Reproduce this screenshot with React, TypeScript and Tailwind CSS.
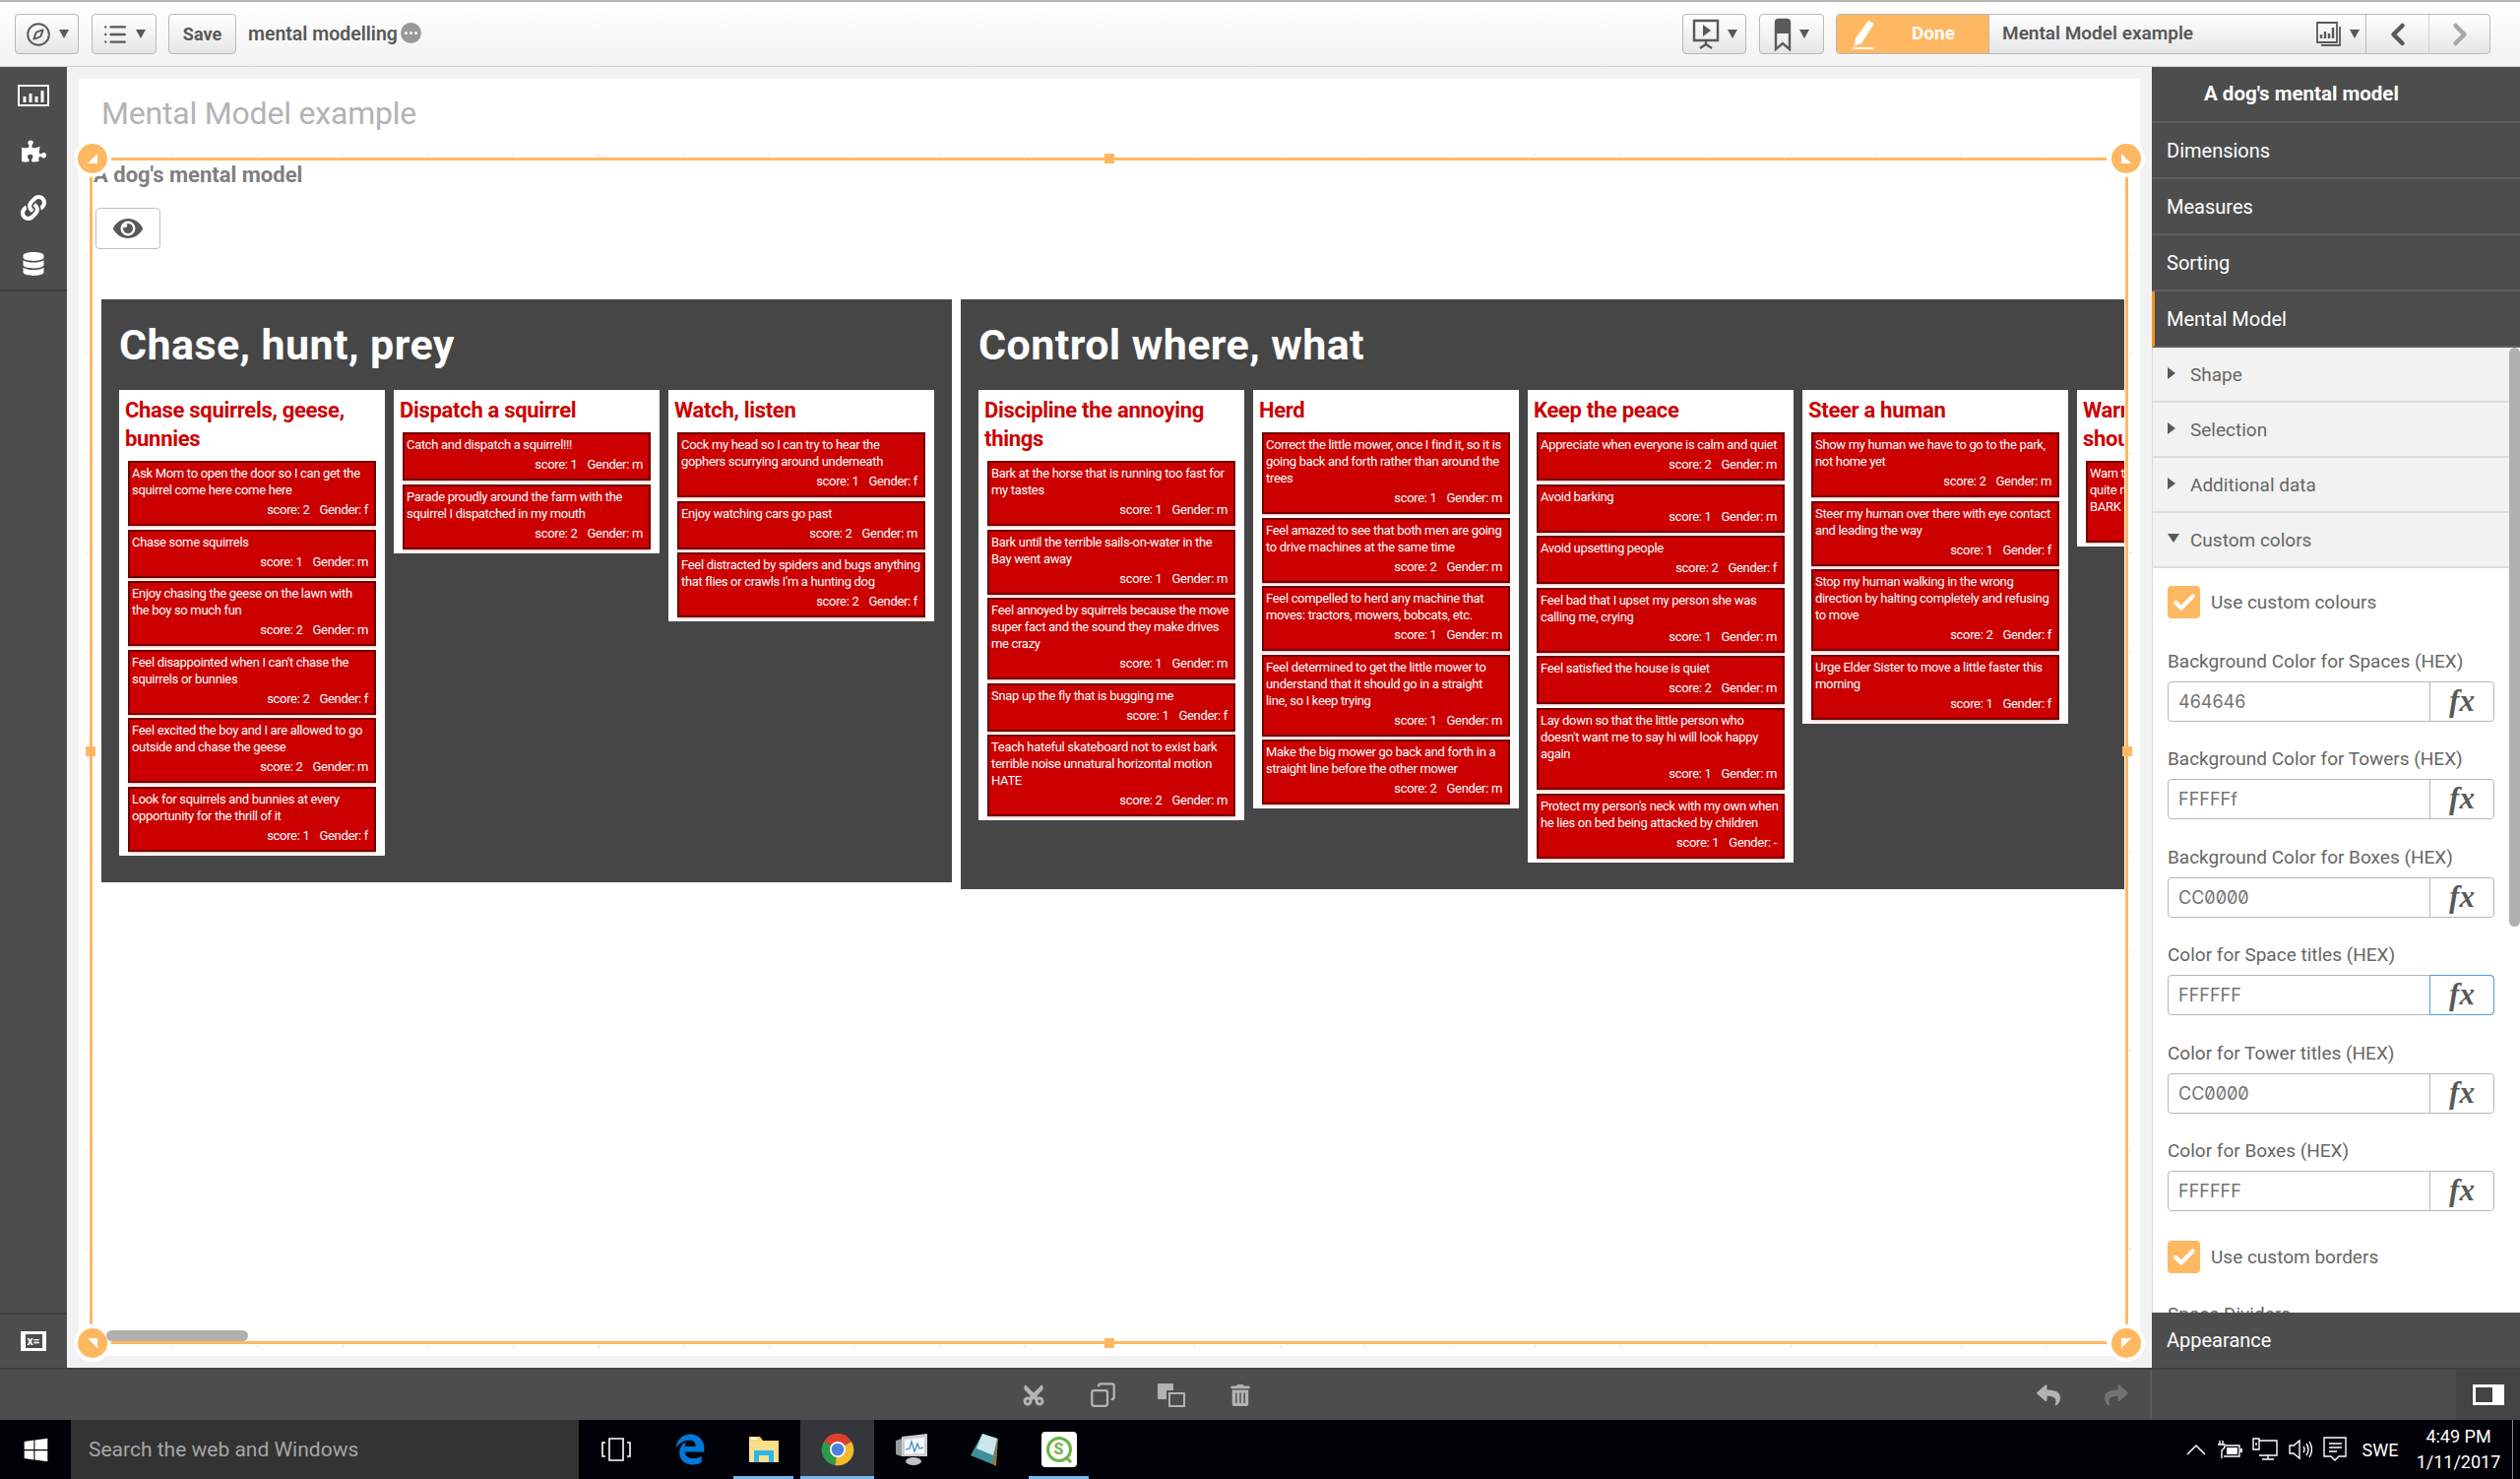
import { Compass, List, ChevronLeft, ChevronRight, Check, Copy } from 'lucide-react'
import { FaPuzzlePiece, FaLink, FaDatabase, FaEye, FaTrashAlt, FaCut, FaReply, FaShare, FaWindows, FaEdgeLegacy } from 'react-icons/fa'

type Item = { t: string; s: number; g: string }
type TowerData = { title: string; items: Item[] }

const chase: TowerData[] = [
  {
    title: 'Chase squirrels, geese,\nbunnies',
    items: [
      { t: 'Ask Mom to open the door so I can get the\nsquirrel come here come here', s: 2, g: 'f' },
      { t: 'Chase some squirrels', s: 1, g: 'm' },
      { t: 'Enjoy chasing the geese on the lawn with\nthe boy so much fun', s: 2, g: 'm' },
      { t: "Feel disappointed when I can't chase the\nsquirrels or bunnies", s: 2, g: 'f' },
      { t: 'Feel excited the boy and I are allowed to go\noutside and chase the geese', s: 2, g: 'm' },
      { t: 'Look for squirrels and bunnies at every\nopportunity for the thrill of it', s: 1, g: 'f' },
    ],
  },
  {
    title: 'Dispatch a squirrel',
    items: [
      { t: 'Catch and dispatch a squirrel!!!', s: 1, g: 'm' },
      { t: 'Parade proudly around the farm with the\nsquirrel I dispatched in my mouth', s: 2, g: 'm' },
    ],
  },
  {
    title: 'Watch, listen',
    items: [
      { t: 'Cock my head so I can try to hear the\ngophers scurrying around underneath', s: 1, g: 'f' },
      { t: 'Enjoy watching cars go past', s: 2, g: 'm' },
      { t: "Feel distracted by spiders and bugs anything\nthat flies or crawls I'm a hunting dog", s: 2, g: 'f' },
    ],
  },
]

const control: TowerData[] = [
  {
    title: 'Discipline the annoying\nthings',
    items: [
      { t: 'Bark at the horse that is running too fast for\nmy tastes', s: 1, g: 'm' },
      { t: 'Bark until the terrible sails-on-water in the\nBay went away', s: 1, g: 'm' },
      { t: 'Feel annoyed by squirrels because the move\nsuper fact and the sound they make drives\nme crazy', s: 1, g: 'm' },
      { t: 'Snap up the fly that is bugging me', s: 1, g: 'f' },
      { t: 'Teach hateful skateboard not to exist bark\nterrible noise unnatural horizontal motion\nHATE', s: 2, g: 'm' },
    ],
  },
  {
    title: 'Herd',
    items: [
      { t: 'Correct the little mower, once I find it, so it is\ngoing back and forth rather than around the\ntrees', s: 1, g: 'm' },
      { t: 'Feel amazed to see that both men are going\nto drive machines at the same time', s: 2, g: 'm' },
      { t: 'Feel compelled to herd any machine that\nmoves: tractors, mowers, bobcats, etc.', s: 1, g: 'm' },
      { t: 'Feel determined to get the little mower to\nunderstand that it should go in a straight\nline, so I keep trying', s: 1, g: 'm' },
      { t: 'Make the big mower go back and forth in a\nstraight line before the other mower', s: 2, g: 'm' },
    ],
  },
  {
    title: 'Keep the peace',
    items: [
      { t: 'Appreciate when everyone is calm and quiet', s: 2, g: 'm' },
      { t: 'Avoid barking', s: 1, g: 'm' },
      { t: 'Avoid upsetting people', s: 2, g: 'f' },
      { t: 'Feel bad that I upset my person she was\ncalling me, crying', s: 1, g: 'm' },
      { t: 'Feel satisfied the house is quiet', s: 2, g: 'm' },
      { t: "Lay down so that the little person who\ndoesn't want me to say hi will look happy\nagain", s: 1, g: 'm' },
      { t: "Protect my person's neck with my own when\nhe lies on bed being attacked by children", s: 1, g: '-' },
    ],
  },
  {
    title: 'Steer a human',
    items: [
      { t: 'Show my human we have to go to the park,\nnot home yet', s: 2, g: 'm' },
      { t: 'Steer my human over there with eye contact\nand leading the way', s: 1, g: 'f' },
      { t: 'Stop my human walking in the wrong\ndirection by halting completely and refusing\nto move', s: 2, g: 'f' },
      { t: 'Urge Elder Sister to move a little faster this\nmorning', s: 1, g: 'f' },
    ],
  },
  {
    title: 'Warn the humans\nshould they',
    items: [{ t: 'Warn the humans\nquite near\nBARK', s: 1, g: 'm' }],
  },
]

const fields = [
  { label: 'Background Color for Spaces (HEX)', value: '464646' },
  { label: 'Background Color for Towers (HEX)', value: 'FFFFFf' },
  { label: 'Background Color for Boxes (HEX)', value: 'CC0000' },
  { label: 'Color for Space titles (HEX)', value: 'FFFFFF', focus: true },
  { label: 'Color for Tower titles (HEX)', value: 'CC0000' },
  { label: 'Color for Boxes (HEX)', value: 'FFFFFF' },
]

function Caret({ className = 'text-[#595959]' }: { className?: string }) {
  return (
    <svg width="10" height="9" viewBox="0 0 10 9" className={className}>
      <path d="M0 0h10L5 9z" fill="currentColor" />
    </svg>
  )
}

function ToolButton({ children, width }: { children: React.ReactNode; width: string }) {
  return (
    <div className={`${width} h-[41px] flex items-center justify-center gap-2 rounded border border-[#b8b8b8] bg-gradient-to-b from-white to-[#e6e6e6] text-[#595959]`}>
      {children}
    </div>
  )
}

function Toolbar() {
  return (
    <div className="h-[68px] flex-none flex items-center pl-[15px] pr-[30px] border-t-2 border-t-[#b5b5b5] border-b border-b-[#d4d4d4] bg-gradient-to-b from-white to-[#f2f2f2]">
      <ToolButton width="w-[65px]">
        <Compass size={26} strokeWidth={1.8} />
        <Caret />
      </ToolButton>
      <div className="w-[13px]" />
      <ToolButton width="w-[66px]">
        <List size={26} strokeWidth={2.2} />
        <Caret />
      </ToolButton>
      <div className="w-[12px]" />
      <ToolButton width="w-[69px]">
        <span className="text-[18px] font-bold">Save</span>
      </ToolButton>
      <span className="ml-[12px] text-[19.5px] font-semibold text-[#595959]">mental modelling</span>
      <div className="ml-[3px] mb-[3px] w-[21px] h-[21px] rounded-full bg-[#999] flex items-center justify-center gap-[2px]">
        <i className="w-[3px] h-[3px] rounded-full bg-white" />
        <i className="w-[3px] h-[3px] rounded-full bg-white" />
        <i className="w-[3px] h-[3px] rounded-full bg-white" />
      </div>

      <div className="ml-auto flex items-center">
        <ToolButton width="w-[65px]">
          <svg width="28" height="34" viewBox="0 0 28 34" fill="none" stroke="currentColor" strokeWidth="2.4">
            <path d="M2 3h24v20H2zM14 23v5M8 31l6-4 6 4" />
            <path d="M11 7l8 6-8 6z" fill="currentColor" stroke="none" />
          </svg>
          <Caret />
        </ToolButton>
        <div className="w-[13px]" />
        <ToolButton width="w-[66px]">
          <svg width="18" height="34" viewBox="0 0 18 34" fill="none" stroke="currentColor" strokeWidth="2.4">
            <path d="M2 5q0-3 3-3h8q3 0 3 3v27l-7-6-7 6z" />
            <path d="M2 5q0-3 3-3h8q3 0 3 3v11H2z" fill="currentColor" stroke="none" />
          </svg>
          <Caret />
        </ToolButton>
        <div className="w-[12px]" />
        <div className="w-[665px] h-[41px] flex rounded border border-[#b8b8b8] bg-gradient-to-b from-white to-[#e6e6e6]">
          <div className="w-[154px] flex items-center pl-[14px] bg-[#ffb862] text-white rounded-l-[3px]">
            <svg width="28" height="30" viewBox="0 0 28 30" fill="white">
              <path d="M18 1l6 3-13 20-7 3 1-8zM2 28h22v2H2z" />
            </svg>
            <span className="ml-[34px] text-[19px] font-bold">Done</span>
          </div>
          <div className="w-[383px] flex items-center pl-[13px] pr-[6px] border-l border-[#b8b8b8] text-[#595959]">
            <span className="text-[19px] font-semibold">Mental Model example</span>
            <svg className="ml-auto" width="30" height="30" viewBox="0 0 30 30" fill="none" stroke="currentColor" strokeWidth="1.8">
              <path d="M3 3h20v20H3zM26 7v19H7" />
              <path d="M7 19v-4M11 19v-7M15 19v-5M19 19V8" strokeWidth="2.4" />
            </svg>
            <span className="ml-[6px]">
              <Caret />
            </span>
          </div>
          <div className="w-[64px] flex items-center justify-center border-l border-[#b8b8b8] text-[#595959]">
            <ChevronLeft size={36} strokeWidth={3} />
          </div>
          <div className="flex-1 flex items-center justify-center border-l border-[#cfcfcf] text-[#a6a6a6]">
            <ChevronRight size={36} strokeWidth={3} />
          </div>
        </div>
      </div>
    </div>
  )
}

function LeftRail() {
  return (
    <div className="w-[68px] flex-none flex flex-col bg-[#4d4d4d] text-white">
      <div className="h-[228px] border-b-2 border-[#3f3f3f] flex flex-col items-center pt-[18px]">
        <svg width="32" height="22" viewBox="0 0 32 22" fill="none" stroke="white" strokeWidth="2">
          <path d="M1 1h30v20H1z" />
          <path d="M7 18v-6M13 18V9M19 18v-6M25 18V6" strokeWidth="3" />
        </svg>
        <FaPuzzlePiece size={25} className="mt-[33px]" />
        <FaLink size={26} className="mt-[32px]" />
        <FaDatabase size={24} className="mt-[32px]" />
      </div>
      <div className="mt-auto h-[56px] border-t-2 border-[#3f3f3f] flex items-center justify-center">
        <div className="w-[26px] h-[20px] bg-white flex items-center justify-center">
          <span className="px-[2px] bg-[#4d4d4d] text-[12px] leading-[14px] font-bold text-white">x=</span>
        </div>
      </div>
    </div>
  )
}

function Box({ item }: { item: Item }) {
  return (
    <div className="w-[252px] flex-none border-2 border-[#700000] bg-[#cc0000] shadow-[0_1.5px_0_#f3c9c9] pl-[2px] pr-[6px] pt-[2px] pb-[6px] text-white text-[13px] leading-[17px] tracking-[-0.32px]">
      <div className="whitespace-pre">{item.t}</div>
      <div className="mt-[3px] flex justify-end gap-[10px] whitespace-pre">
        <span>score: {item.s}</span>
        <span>Gender: {item.g}</span>
      </div>
    </div>
  )
}

function Tower({ tower }: { tower: TowerData }) {
  return (
    <div className="w-[270px] flex-none bg-white px-[9px] pb-[4px]">
      <div className="-mx-[3px] pt-[6px] pb-[8px] text-[#cc0000] text-[22px] leading-[29px] font-bold tracking-[-0.3px] whitespace-pre overflow-hidden">
        {tower.title}
      </div>
      <div className="flex flex-col gap-[3.6px]">
        {tower.items.map((item, i) => (
          <Box key={i} item={item} />
        ))}
      </div>
    </div>
  )
}

function Space({ title, towers, width }: { title: string; towers: TowerData[]; width: string }) {
  return (
    <div className={`${width} flex-none bg-[#464646] pl-[18px] pr-[18px] pb-[27px]`}>
      <div className="h-[92px] pt-[22px] text-white text-[43px] leading-[48px] font-bold tracking-[0.4px]">{title}</div>
      <div className="flex items-start gap-[9px]">
        {towers.map((t, i) => (
          <Tower key={i} tower={t} />
        ))}
      </div>
    </div>
  )
}

function Handle({ pos, points }: { pos: string; points: string }) {
  return (
    <div className={`absolute ${pos} w-[38px] h-[38px] rounded-full bg-white p-[4px]`}>
      <div className="w-[30px] h-[30px] rounded-full bg-[#ffb862] flex items-center justify-center">
        <svg width="12" height="12" viewBox="0 0 12 12">
          <polygon points={points} fill="white" />
        </svg>
      </div>
    </div>
  )
}

function SelectionFrame() {
  return (
    <>
      <div className="absolute left-0 right-0 -top-[4px] h-[3px] bg-[repeating-linear-gradient(90deg,transparent_0,transparent_84px,#fde3bf_84px,#fde3bf_85px,transparent_85px,transparent_86.5px)]" />
      <div className="absolute left-0 right-0 -bottom-[4px] h-[3px] bg-[repeating-linear-gradient(90deg,transparent_0,transparent_84px,#fde3bf_84px,#fde3bf_85px,transparent_85px,transparent_86.5px)]" />
      <div className="absolute -left-[4px] top-0 bottom-0 w-[3px] bg-[repeating-linear-gradient(180deg,transparent_0,transparent_98px,#fde3bf_98px,#fde3bf_99px,transparent_99px,transparent_101px)]" />
      <div className="absolute -right-[4px] top-0 bottom-0 w-[3px] bg-[repeating-linear-gradient(180deg,transparent_0,transparent_98px,#fde3bf_98px,#fde3bf_99px,transparent_99px,transparent_101px)]" />

      <div className="absolute left-[22px] right-[22px] top-0 h-[3px] bg-[#ffb862]" />
      <div className="absolute left-[22px] right-[22px] bottom-0 h-[3px] bg-[#ffb862]" />
      <div className="absolute left-0 top-[20px] bottom-[20px] w-[3px] bg-[#ffb862]" />
      <div className="absolute right-0 top-[20px] bottom-[20px] w-[3px] bg-[#ffb862]" />

      <div className="absolute left-[1031px] -top-[4px] w-[10px] h-[10px] bg-[#ffb862]" />
      <div className="absolute left-[1031px] -bottom-[4px] w-[10px] h-[10px] bg-[#ffb862]" />
      <div className="absolute -left-[4px] top-[598px] w-[10px] h-[10px] bg-[#ffb862]" />
      <div className="absolute -right-[4px] top-[598px] w-[10px] h-[10px] bg-[#ffb862]" />

      <Handle pos="-left-[16px] -top-[18px]" points="11,1 11,11 1,11" />
      <Handle pos="-right-[17px] -top-[18px]" points="1,1 11,11 1,11" />
      <Handle pos="-left-[16px] -bottom-[18px]" points="1,1 11,1 11,11" />
      <Handle pos="-right-[17px] -bottom-[18px]" points="1,1 11,1 1,11" />

      <div className="absolute left-[17px] top-[1191px] w-[144px] h-[11px] rounded-full bg-[#b0b0b0]" />
    </>
  )
}

function Canvas() {
  return (
    <div className="flex-1 bg-[#f2f2f2] px-[12px] py-[12px]">
      <div className="h-full bg-white">
        <div className="h-[70px] pl-[23px] flex items-center text-[32px] text-[#b3b3b3] tracking-[-0.2px]">Mental Model example</div>
        <div className="relative mt-[10px] ml-[11px] w-[2071px] h-[1205px]">
          <div className="pl-[4px] pt-[6px] h-[30px] text-[22px] leading-[24px] font-bold text-[#7f7f7f]">A dog's mental model</div>
          <div className="ml-[6px] mt-[21px] w-[66px] h-[42px] rounded border border-[#bfbfbf] bg-white flex items-center justify-center text-[#595959]">
            <FaEye size={30} />
          </div>
          <div className="ml-[12px] mt-[51px] w-[2055px] overflow-hidden flex items-start gap-[9px]">
            <Space title="Chase, hunt, prey" towers={chase} width="w-[864px]" />
            <Space title="Control where, what" towers={control} width="w-[1440px]" />
          </div>
          <SelectionFrame />
        </div>
      </div>
    </div>
  )
}

function PanelRow({ label, active }: { label: string; active?: boolean }) {
  return (
    <div className={`h-[57px] flex-none flex items-center border-b-2 border-[#5e5e5e] text-white text-[20px] ${active ? 'border-l-[3px] border-l-[#f7941d] pl-[12px] border-b-0' : 'pl-[15px]'}`}>
      {label}
    </div>
  )
}

function AccordionRow({ label, open }: { label: string; open?: boolean }) {
  return (
    <div className="h-[56px] flex items-center bg-[#f2f2f2] border-b-2 border-[#dcdcdc] pl-[15px] pt-[2px] text-[19px] text-[#666]">
      <span className="w-[23px] flex-none">
        {open ? (
          <svg width="12" height="10" viewBox="0 0 12 10" className="mb-[4px]">
            <path d="M0 0h12L6 9z" fill="#595959" />
          </svg>
        ) : (
          <svg width="9" height="12" viewBox="0 0 9 12" className="mb-[5px]">
            <path d="M0 0l8 6-8 6z" fill="#595959" />
          </svg>
        )}
      </span>
      {label}
    </div>
  )
}

function CheckRow({ label }: { label: string }) {
  return (
    <div className="flex items-center gap-[11px] text-[19px] text-[#666]">
      <div className="w-[33px] h-[33px] rounded bg-[#ffb862] flex items-center justify-center text-white">
        <Check size={26} strokeWidth={4} />
      </div>
      <span className="mt-[2px]">{label}</span>
    </div>
  )
}

function Field({ label, value, focus }: { label: string; value: string; focus?: boolean }) {
  return (
    <div className="mt-[26.5px]">
      <div className="h-[24px] leading-[24px] text-[19px] text-[#666]">{label}</div>
      <div className="mt-[8px] h-[41px] flex rounded border border-[#b8b8b8] bg-white">
        <div className="flex-1 flex items-center pl-[10px] font-['Inter',sans-serif] slashed-zero text-[18px] text-[#737373]">{value}</div>
        <div className={`w-[65px] flex items-center justify-center font-['Liberation_Serif',serif] italic font-bold text-[31px] text-[#595959] ${focus ? 'border border-[#4aa3d9] rounded-r -my-px -mr-px w-[66px]' : 'border-l border-[#b8b8b8]'}`}>
          fx
        </div>
      </div>
    </div>
  )
}

function RightPanel() {
  return (
    <div className="w-[374px] flex-none flex flex-col bg-[#4d4d4d]">
      <div className="h-[57px] flex-none flex items-center pl-[53px] border-b-2 border-[#5e5e5e] text-white text-[20.5px] font-bold">A dog's mental model</div>
      <PanelRow label="Dimensions" />
      <PanelRow label="Measures" />
      <PanelRow label="Sorting" />
      <PanelRow label="Mental Model" active />
      <div className="flex-1 flex bg-white border-l border-[#d9d9d9] overflow-hidden">
        <div className="w-[362px] flex-none">
          <AccordionRow label="Shape" />
          <AccordionRow label="Selection" />
          <AccordionRow label="Additional data" />
          <AccordionRow label="Custom colors" open />
          <div className="pl-[15px] pr-[15px] pt-[18px]">
            <CheckRow label="Use custom colours" />
            <div className="h-[5px]" />
            {fields.map((f) => (
              <Field key={f.label} label={f.label} value={f.value} focus={f.focus} />
            ))}
            <div className="h-[30px]" />
            <CheckRow label="Use custom borders" />
            <div className="mt-[30px] text-[19px] leading-[24px] text-[#666]">Space Dividers</div>
          </div>
        </div>
        <div className="w-[11px] h-[588px] rounded-md bg-[#b0b0b0]" />
      </div>
      <div className="h-[56px] flex-none flex items-center pl-[15px] text-white text-[20px]">Appearance</div>
    </div>
  )
}

function BottomBar() {
  return (
    <div className="h-[53px] flex-none flex bg-[#4d4d4d] border-t-2 border-[#3f3f3f]">
      <div className="w-[2186px] flex items-center pl-[1030px] pr-[14px] border-r-2 border-[#5a5a5a] text-[#b3b3b3]">
        <div className="w-[40px] flex justify-center">
          <FaCut size={24} className="-rotate-90" />
        </div>
        <div className="w-[40px] ml-[30px] flex justify-center">
          <Copy size={27} strokeWidth={2} className="-scale-x-100" />
        </div>
        <div className="w-[40px] ml-[30px] flex justify-center">
          <svg width="30" height="26" viewBox="0 0 30 26">
            <path d="M1 2q0-1 1-1h14q1 0 1 1v6h-7v9H2q-1 0-1-1z" fill="currentColor" />
            <path d="M13 11h15v13H13z" fill="none" stroke="currentColor" strokeWidth="2" />
          </svg>
        </div>
        <div className="w-[40px] ml-[30px] flex justify-center">
          <FaTrashAlt size={22} />
        </div>
        <div className="w-[40px] ml-auto flex justify-center">
          <FaReply size={24} />
        </div>
        <div className="w-[40px] ml-[29px] flex justify-center text-[#737373]">
          <FaShare size={24} />
        </div>
      </div>
      <div className="flex-1" />
      <div className="w-[65px] bg-[#434343] flex items-center justify-center">
        <div className="w-[32px] h-[21px] bg-white p-[3px]">
          <div className="w-[17px] h-full bg-[#434343]" />
        </div>
      </div>
    </div>
  )
}

function ExplorerIcon() {
  return (
    <svg width="32" height="28" viewBox="0 0 32 28">
      <path d="M1 1h11l3 4h16v22H1z" fill="#f6d77a" />
      <path d="M1 6h30v21H1z" fill="#fbe08c" />
      <path d="M3 2h6v2H3z" fill="#fff" />
      <path d="M6 27V15h20v12h-5v-7H11v7z" fill="#2bb5e8" />
    </svg>
  )
}

function ChromeIcon() {
  return (
    <svg width="34" height="34" viewBox="0 0 34 34">
      <path d="M17 17L3 9A16 16 0 0 1 31 9Z" fill="#d9402f" />
      <path d="M17 17L31 9A16 16 0 0 1 14 33Z" fill="#f2bb2b" />
      <path d="M17 17L14 33A16 16 0 0 1 3 9Z" fill="#2f9a49" />
      <circle cx="17" cy="17" r="8" fill="#fff" />
      <circle cx="17" cy="17" r="6.3" fill="#4a80e0" />
    </svg>
  )
}

function MonitorIcon() {
  return (
    <svg width="34" height="34" viewBox="0 0 34 34">
      <path d="M1 8l6-2v18l-6-2z" fill="#9a9a9a" />
      <path d="M7 4l26-3v23L7 24z" fill="#c9ced3" />
      <path d="M10 7l20-2v16L10 22z" fill="#f5f9fc" />
      <path d="M11 17l4-1 2-7 3 10 3-8 2 5 4-1" fill="none" stroke="#3f86cc" strokeWidth="1.2" />
      <ellipse cx="19" cy="29" rx="8" ry="4" fill="#c2c2c2" />
    </svg>
  )
}

function NotesIcon() {
  return (
    <svg width="32" height="34" viewBox="0 0 32 34">
      <path d="M13 1l16 5-2 28-4-2z" fill="#8a7a45" />
      <path d="M13 1l15 5-5 26L1 23z" fill="#3f8f9f" />
      <path d="M13 1l15 5-4 17L7 16z" fill="#cbe7ee" />
    </svg>
  )
}

function SenseIcon() {
  return (
    <div className="relative w-[36px] h-[36px] rounded-[4px] bg-white flex items-center justify-center">
      <div className="w-[26px] h-[26px] rounded-full border-[3px] border-[#6bb345] flex items-center justify-center text-[#6bb345] text-[16px] leading-none font-bold">S</div>
      <div className="absolute right-[5px] bottom-[6px] w-[7px] h-[3px] rotate-45 bg-[#6bb345]" />
    </div>
  )
}

function AppSlot({ children, bar, active }: { children: React.ReactNode; bar?: boolean; active?: boolean }) {
  return (
    <div className={`relative w-[75px] flex items-center justify-center ${active ? 'bg-[#33363b]' : ''}`}>
      {children}
      {bar && <div className={`absolute bottom-0 h-[3px] bg-[#76b9ed] ${active ? 'left-0 right-0' : 'left-[7px] right-[7px]'}`} />}
    </div>
  )
}

function Taskbar() {
  return (
    <div className="h-[60px] flex-none flex bg-[#000208] text-white">
      <div className="w-[72px] flex items-center justify-center">
        <FaWindows size={27} />
      </div>
      <div className="w-[516px] bg-[#333] flex items-center pl-[18px] pt-[2px] text-[21px] text-[#a6a6a6]">Search the web and Windows</div>
      <AppSlot>
        <svg width="30" height="26" viewBox="0 0 30 26" fill="none" stroke="white" strokeWidth="1.6">
          <path d="M8 2h14v22H8zM4 6H1v14h3M26 6h3v14h-3" />
        </svg>
      </AppSlot>
      <AppSlot>
        <FaEdgeLegacy size={32} className="text-[#0078d7]" />
      </AppSlot>
      <AppSlot bar>
        <ExplorerIcon />
      </AppSlot>
      <AppSlot bar active>
        <ChromeIcon />
      </AppSlot>
      <AppSlot>
        <MonitorIcon />
      </AppSlot>
      <AppSlot>
        <NotesIcon />
      </AppSlot>
      <AppSlot bar>
        <SenseIcon />
      </AppSlot>

      <div className="ml-auto flex items-center pr-[7px]">
        <div className="w-[33px] flex justify-center">
          <svg width="20" height="12" viewBox="0 0 20 12" fill="none" stroke="white" strokeWidth="1.5">
            <path d="M1 11l9-9 9 9" />
          </svg>
        </div>
        <div className="w-[36px] flex justify-center">
          <svg width="26" height="20" viewBox="0 0 26 20" fill="none" stroke="white" strokeWidth="1.4">
            <path d="M3 1v4M6 1v4M1 5h7v3l-3 3v8M9 6h14v11H7" />
            <path d="M10 8h11v7H10z" fill="white" stroke="none" />
            <path d="M24 9h2v4h-2z" fill="white" stroke="none" />
          </svg>
        </div>
        <div className="w-[36px] flex justify-center">
          <svg width="26" height="24" viewBox="0 0 26 24" fill="none" stroke="white" strokeWidth="1.4">
            <path d="M7 3h18v15H7M1 1h6v11H1zM4 5v3M16 18v4M10 22h12" />
          </svg>
        </div>
        <div className="w-[35px] flex justify-center">
          <svg width="24" height="22" viewBox="0 0 24 22" fill="none" stroke="white" strokeWidth="1.4">
            <path d="M1 7h4l6-5v18l-6-5H1zM15 8q2 3 0 6M18 5q4 6 0 12M21 3q5 8 0 16" />
          </svg>
        </div>
        <div className="w-[36px] flex justify-center">
          <svg width="26" height="26" viewBox="0 0 26 26" fill="none" stroke="white" strokeWidth="1.4">
            <path d="M2 1h22v19h-7l-4 4-4-4H2zM7 7h13M7 11h13M7 15h8" />
          </svg>
        </div>
        <div className="w-[56px] text-center text-[18px]">SWE</div>
        <div className="w-[103px] text-center text-[18px] leading-[26px]">
          <div>4:49 PM</div>
          <div>1/11/2017</div>
        </div>
        <div className="ml-[3px] w-px h-full bg-[#8a8a8a]" />
      </div>
    </div>
  )
}

export default function App() {
  return (
    <div className="w-[2560px] h-[1502px] flex flex-col overflow-hidden font-['Roboto',sans-serif]">
      <Toolbar />
      <div className="flex-1 flex min-h-0">
        <LeftRail />
        <Canvas />
        <RightPanel />
      </div>
      <BottomBar />
      <Taskbar />
    </div>
  )
}
